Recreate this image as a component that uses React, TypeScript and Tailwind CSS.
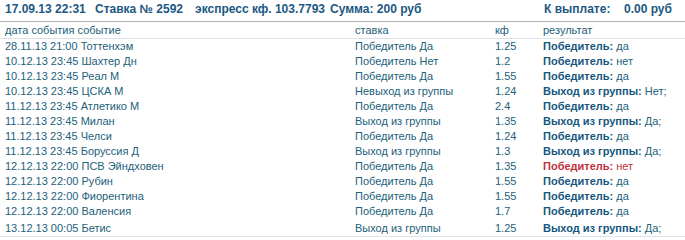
const rows: [string, string, string, string, string, string, boolean?][] = [
  ['28.11.13 21:00', 'Тоттенхэм', 'Победитель Да', '1.25', 'Победитель:', 'да'],
  ['10.12.13 23:45', 'Шахтер Дн', 'Победитель Нет', '1.2', 'Победитель:', 'нет'],
  ['10.12.13 23:45', 'Реал М', 'Победитель Да', '1.55', 'Победитель:', 'да'],
  ['10.12.13 23:45', 'ЦСКА М', 'Невыход из группы', '1.24', 'Выход из группы:', 'Нет;'],
  ['11.12.13 23:45', 'Атлетико М', 'Победитель Да', '2.4', 'Победитель:', 'да'],
  ['11.12.13 23:45', 'Милан', 'Выход из группы', '1.35', 'Выход из группы:', 'Да;'],
  ['11.12.13 23:45', 'Челси', 'Победитель Да', '1.24', 'Победитель:', 'да'],
  ['11.12.13 23:45', 'Боруссия Д', 'Выход из группы', '1.3', 'Выход из группы:', 'Да;'],
  ['12.12.13 22:00', 'ПСВ Эйндховен', 'Победитель Да', '1.35', 'Победитель:', 'нет', true],
  ['12.12.13 22:00', 'Рубин', 'Победитель Да', '1.55', 'Победитель:', 'да'],
  ['12.12.13 22:00', 'Фиорентина', 'Победитель Да', '1.55', 'Победитель:', 'да'],
  ['12.12.13 22:00', 'Валенсия', 'Победитель Да', '1.7', 'Победитель:', 'да'],
  ['13.12.13 00:05', 'Бетис', 'Выход из группы', '1.25', 'Выход из группы:', 'Да;'],
];

export default function App() {
  return (
    <div
      className="w-[685px] h-[240px] bg-white overflow-hidden text-[11px] text-[#22617a]"
      style={{ fontFamily: 'Tahoma, "Liberation Sans", Arial, sans-serif' }}
    >
      {/* header */}
      <div className="flex items-end h-[22px] pb-[3px] pl-[5px] text-[12px] font-bold text-[#1b5883] border-b border-[#aab4bf] whitespace-nowrap">
        <span className="w-[90px]">17.09.13 22:31</span>
        <span className="w-[100px]">Ставка № 2592</span>
        <span className="w-[135px]">экспресс кф. 103.7793</span>
        <span>Сумма: 200 руб</span>
        <span className="ml-auto w-[80px]">К выплате:</span>
        <span className="w-[61px]">0.00 руб</span>
      </div>

      {/* column titles */}
      <div className="flex items-center h-[17px] border-b border-[#dde2e6]">
        <div className="w-[355px] pl-[5px]">дата события событие</div>
        <div className="w-[140px]">ставка</div>
        <div className="w-[48px]">кф</div>
        <div>результат</div>
      </div>

      {rows.map((r, i) => (
        <div
          key={i}
          className={`flex items-center ${i === rows.length - 1 ? 'h-[18px] pt-[2px] border-b border-[#dde2e6]' : 'h-[15px]'}`}
        >
          <div className="w-[355px] pl-[5px] whitespace-nowrap">
            {r[0]} {r[1]}
          </div>
          <div className="w-[140px] whitespace-nowrap">{r[2]}</div>
          <div className="w-[48px]">{r[3]}</div>
          <div className="whitespace-nowrap">
            <span className={`font-bold ${r[6] ? 'text-[#c0303a]' : 'text-[#15577e]'}`}>{r[4]}</span>{' '}
            <span className={r[6] ? 'text-[#c0303a]' : ''}>{r[5]}</span>
          </div>
        </div>
      ))}
    </div>
  );
}
